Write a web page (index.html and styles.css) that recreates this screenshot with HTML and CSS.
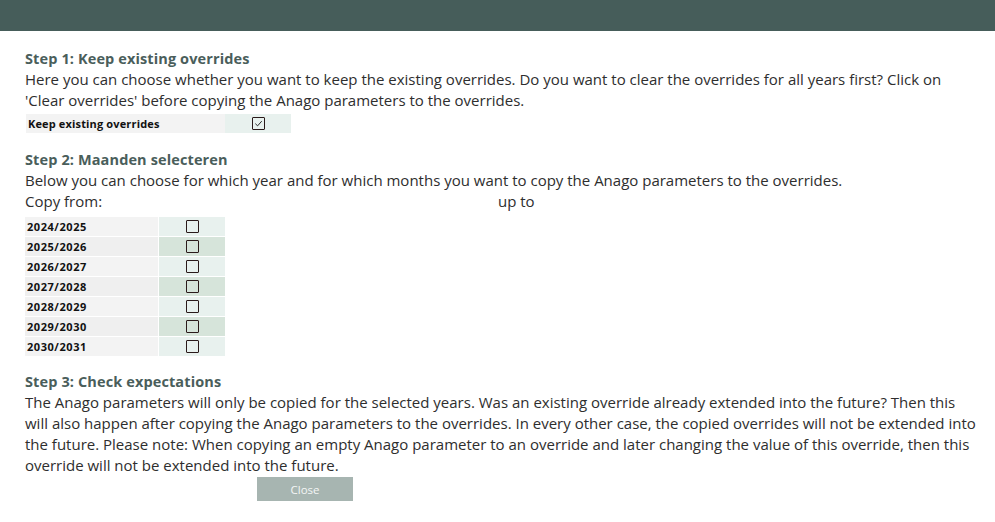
FILE: index.html
```html
<!DOCTYPE html>
<html>
<head>
<meta charset="utf-8">
<link rel="stylesheet" href="styles.css">
</head>
<body>
<header class="topbar"></header>
<main class="content">
  <section class="step">
    <h2 class="step-title">Step 1: Keep existing overrides</h2>
    <p class="step-text">Here you can choose whether you want to keep the existing overrides. Do you want to clear the overrides for all years first? Click on 'Clear overrides' before copying the Anago parameters to the overrides.</p>
    <div class="keep-row">
      <div class="keep-label">Keep existing overrides</div>
      <div class="keep-check"><span class="box checked"><svg viewBox="0 0 10 10" width="9" height="9"><path d="M1.5 5.2 L4 7.6 L8.6 2.4" fill="none" stroke="#222" stroke-width="1.1"/></svg></span></div>
    </div>
  </section>
  <section class="step step2">
    <h2 class="step-title">Step 2: Maanden selecteren</h2>
    <p class="step-text">Below you can choose for which year and for which months you want to copy the Anago parameters to the overrides.</p>
    <div class="copy-row"><span class="copy-from">Copy from:</span><span class="up-to">up to</span></div>
    <div class="years">
      <div class="yr"><div class="yr-label">2024/2025</div><div class="yr-check"><span class="box"></span></div></div>
      <div class="yr alt"><div class="yr-label">2025/2026</div><div class="yr-check"><span class="box"></span></div></div>
      <div class="yr"><div class="yr-label">2026/2027</div><div class="yr-check"><span class="box"></span></div></div>
      <div class="yr alt"><div class="yr-label">2027/2028</div><div class="yr-check"><span class="box"></span></div></div>
      <div class="yr"><div class="yr-label">2028/2029</div><div class="yr-check"><span class="box"></span></div></div>
      <div class="yr alt"><div class="yr-label">2029/2030</div><div class="yr-check"><span class="box"></span></div></div>
      <div class="yr last"><div class="yr-label">2030/2031</div><div class="yr-check"><span class="box"></span></div></div>
    </div>
  </section>
  <section class="step step3">
    <h2 class="step-title">Step 3: Check expectations</h2>
    <p class="step-text">The Anago parameters will only be copied for the selected years. Was an existing override already extended into the future? Then this will also happen after copying the Anago parameters to the overrides. In every other case, the copied overrides will not be extended into the future. Please note: When copying an empty Anago parameter to an override and later changing the value of this override, then this override will not be extended into the future.</p>
    <div class="actions"><button class="close-btn">Close</button></div>
  </section>
</main>
</body>
</html>
```

FILE: styles.css
```css
* { box-sizing: border-box; }
body {
  margin: 0;
  background: #fff;
  font-family: "Open Sans", "Liberation Sans", sans-serif;
  color: #2e2e2e;
}
.topbar {
  height: 31px;
  background: #465d5a;
}
.content {
  padding: 18px 12px 0 25px;
}
.step-title {
  margin: 0;
  font-size: 14.5px;
  font-weight: 700;
  letter-spacing: 0.12px;
  color: #4a5e5b;
  line-height: 20px;
}
.step-text {
  margin: 0;
  font-size: 15px;
  line-height: 21px;
  max-width: 952px;
}
.keep-row {
  display: flex;
  height: 19px;
  margin: 3px 0 0 1px;
}
.keep-label {
  width: 199px;
  background: #f3f3f3;
  font-size: 11px;
  font-weight: 700;
  letter-spacing: 0.15px;
  color: #111;
  padding-left: 2px;
  line-height: 19px;
}
.keep-check {
  width: 66px;
  background: #e8f1ee;
  display: flex;
  align-items: center;
  justify-content: center;
}
.box {
  display: inline-flex;
  align-items: center;
  justify-content: center;
  width: 13px;
  height: 13px;
  border: 1.5px solid #2a1a1a;
  border-radius: 1px;
  background: transparent;
}
.step2 { margin-top: 17px; }
.copy-row {
  display: flex;
  font-size: 15px;
  line-height: 21px;
}
.copy-from { width: 473px; }
.years {
  margin-top: 5px;
  display: flex;
  flex-direction: column;
}
.yr {
  display: flex;
  height: 20px;
  border-bottom: 1px solid #fff;
}
.yr.last { height: 19px; border-bottom: none; }
.yr-label {
  width: 134px;
  background: #f3f3f3;
  font-size: 11px;
  font-weight: 700;
  letter-spacing: 0.55px;
  color: #111;
  padding-left: 2px;
  line-height: 19px;
  border-right: 1px solid #fff;
}
.yr-check {
  width: 66px;
  background: #e8f1ee;
  display: flex;
  align-items: center;
  justify-content: center;
}
.yr.alt .yr-label { background: #efefef; }
.yr.alt .yr-check { background: #d6e4da; }
.step3 { margin-top: 16px; }
.actions {
  padding-left: 232px;
  margin-top: 1px;
}
.close-btn {
  display: block;
  width: 96px;
  height: 24px;
  border: none;
  background: #a7b5b1;
  color: #f4f6f5;
  font-family: inherit;
  font-size: 11.5px;
  padding: 0;
  cursor: pointer;
}
```
